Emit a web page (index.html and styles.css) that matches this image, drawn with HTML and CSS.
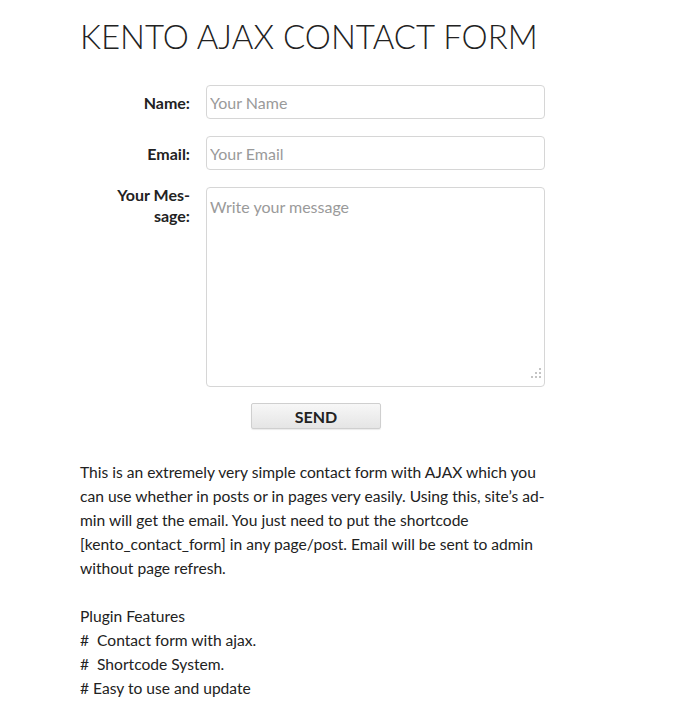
FILE: index.html
```html
<!DOCTYPE html>
<html lang="en">
<head>
<meta charset="utf-8">
<title>Kento Ajax Contact Form</title>
<link rel="stylesheet" href="styles.css">
</head>
<body>
<main class="page">
  <h1 class="title">KENTO AJAX CONTACT FORM</h1>
  <form class="form">
    <div class="row">
      <label class="label" for="name">Name:</label>
      <input class="field" id="name" type="text" placeholder="Your Name">
    </div>
    <div class="row">
      <label class="label" for="email">Email:</label>
      <input class="field" id="email" type="text" placeholder="Your Email">
    </div>
    <div class="row row-msg">
      <label class="label label-msg" for="msg">Your Mes&shy;sage:</label>
      <div class="area-wrap">
        <textarea class="field area" id="msg" placeholder="Write your message"></textarea>
        <svg class="grip" width="10" height="10" viewBox="0 0 10 10" aria-hidden="true">
          <rect x="8" y="0" width="2" height="2"/>
          <rect x="4" y="4" width="2" height="2"/>
          <rect x="8" y="4" width="2" height="2"/>
          <rect x="0" y="8" width="2" height="2"/>
          <rect x="4" y="8" width="2" height="2"/>
          <rect x="8" y="8" width="2" height="2"/>
        </svg>
      </div>
    </div>
    <div class="row row-btn">
      <span></span>
      <div class="btn-wrap"><button class="send" type="button">SEND</button></div>
    </div>
  </form>
  <p class="desc">This is an extremely very simple contact form with AJAX which you can use whether in posts or in pages very easily. Using this, site’s ad&shy;min will get the email. You just need to put the shortcode [kento_contact_form] in any page/post. Email will be sent to admin without page refresh.<br><br>Plugin Features<br>#&nbsp; Contact form with ajax.<br>#&nbsp; Shortcode System.<br># Easy to use and update</p>
</main>
</body>
</html>
```
FILE: styles.css
```css
html, body {
  margin: 0;
  padding: 0;
  background: #fff;
}
body {
  font-family: Lato, "Open Sans", sans-serif;
  color: #222;
}
.page {
  padding: 0 0 0 80px;
  width: 468px;
}
.title {
  margin: 0;
  padding-top: 16px;
  font-size: 33px;
  line-height: 40px;
  font-weight: 300;
  color: #222;
}
.form {
  margin-top: 29px;
}
.row {
  display: grid;
  grid-template-columns: 110px 339px;
  column-gap: 16px;
  align-items: center;
  margin-bottom: 17px;
}
.row-msg {
  align-items: start;
  margin-bottom: 16px;
}
.row + .row-msg {
  margin-top: 2px;
}
.label {
  text-align: right;
  font-weight: 700;
  font-size: 16px;
  color: #222;
}
.label-msg {
  line-height: 21px;
  margin-top: -3px;
  padding-left: 20px;
  hyphens: manual;
}
.field {
  box-sizing: border-box;
  width: 339px;
  height: 34px;
  border: 1px solid #d6d6d6;
  border-radius: 4px;
  padding: 0 3px;
  font-family: Lato, "Open Sans", sans-serif;
  font-size: 16px;
  color: #333;
  background: #fff;
  outline: none;
}
.field::placeholder {
  color: #9a9a9a;
}
.area-wrap {
  position: relative;
  width: 339px;
  height: 200px;
}
.area {
  display: block;
  height: 200px;
  padding: 9px 3px;
  resize: none;
}
.grip {
  position: absolute;
  right: 4px;
  bottom: 9px;
  fill: #c4c4c4;
}
.btn-wrap {
  padding-left: 45px;
}
.send {
  width: 130px;
  height: 26px;
  border: 1px solid #cfcfcf;
  border-radius: 2px;
  background: linear-gradient(#f7f7f7, #e5e5e5);
  box-shadow: 0 1px 1px rgba(0,0,0,0.08);
  font-family: Lato, "Open Sans", sans-serif;
  font-weight: 700;
  font-size: 16px;
  color: #222;
  padding: 0;
}
.desc {
  margin: 31px 0 0;
  font-size: 15.6px;
  line-height: 24px;
  hyphens: manual;
  color: #222;
}
```
